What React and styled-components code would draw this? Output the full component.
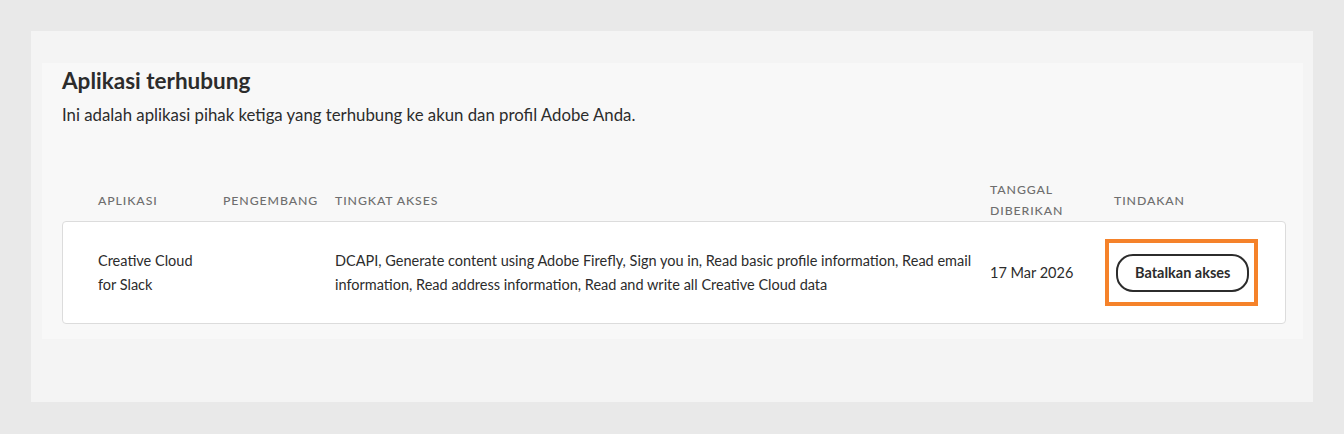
import styled, { createGlobalStyle } from "styled-components";

const Global = createGlobalStyle`
  * { box-sizing: border-box; }
  body {
    margin: 0;
    background: #e9e9e9;
    font-family: Lato, "Noto Sans", sans-serif;
    color: #2c2c2c;
  }
`;

const Page = styled.div`
  padding: 31px 31px 32px 31px;
  min-height: 434px;
`;

const Panel = styled.div`
  background: #f4f4f4;
  height: 371px;
  padding: 32px 10px 0 11px;
`;

const Section = styled.section`
  background: #f8f8f8;
  padding: 2px 17px 15px 20px;
`;

const Title = styled.h2`
  margin: 0;
  font-size: 22.5px;
  font-weight: 700;
  line-height: 32px;
  color: #2c2c2c;
`;

const Lead = styled.p`
  margin: 6px 0 0;
  font-size: 16.8px;
  line-height: 24px;
  color: #2c2c2c;
`;

const cols = "125px 112px 655px 124px 1fr";

const HeadRow = styled.div`
  display: grid;
  grid-template-columns: ${cols};
  align-items: center;
  padding: 0 36px;
  margin-top: 52px;
  height: 42px;
`;

const HeadCell = styled.div`
  font-size: 12.3px;
  line-height: 21px;
  letter-spacing: 0.9px;
  text-transform: uppercase;
  color: #6e6e6e;
  font-weight: 500;
`;

const Card = styled.div`
  background: #fff;
  border: 1px solid #dcdcdc;
  border-radius: 4px;
  display: grid;
  grid-template-columns: ${cols};
  align-items: center;
  padding: 0 35px;
  height: 103px;
`;

const Cell = styled.div`
  font-size: 14.5px;
  line-height: 24px;
  color: #2c2c2c;
  padding-right: ${(p) => p.$pr || 0}px;
`;

// orange annotation frame around the action button
const Highlight = styled.div`
  display: inline-flex;
  margin-left: -9px;
  border: 4px solid #f5822a;
  padding: 11px 5px 10px 7px;
`;

const Button = styled.button`
  all: unset;
  white-space: nowrap;
  height: 34px;
  padding: 0 17px;
  border: 2px solid #2c2c2c;
  border-radius: 17px;
  font-family: Lato, "Noto Sans", sans-serif;
  font-size: 14.5px;
  font-weight: 700;
  color: #2c2c2c;
  display: inline-flex;
  align-items: center;
  cursor: pointer;
`;

export default function App() {
  return (
    <>
      <Global />
      <Page>
        <Panel>
          <Section>
            <Title>Aplikasi terhubung</Title>
            <Lead>Ini adalah aplikasi pihak ketiga yang terhubung ke akun dan profil Adobe Anda.</Lead>
            <HeadRow>
              <HeadCell>Aplikasi</HeadCell>
              <HeadCell>Pengembang</HeadCell>
              <HeadCell>Tingkat akses</HeadCell>
              <HeadCell>
                Tanggal
                <br />
                diberikan
              </HeadCell>
              <HeadCell>Tindakan</HeadCell>
            </HeadRow>
            <Card>
              <Cell $pr={20}>Creative Cloud for Slack</Cell>
              <Cell />
              <Cell $pr={12}>
                DCAPI, Generate content using Adobe Firefly, Sign you in, Read basic profile information, Read email
                information, Read address information, Read and write all Creative Cloud data
              </Cell>
              <Cell>17 Mar 2026</Cell>
              <Cell>
                <Highlight>
                  <Button>Batalkan akses</Button>
                </Highlight>
              </Cell>
            </Card>
          </Section>
        </Panel>
      </Page>
    </>
  );
}
